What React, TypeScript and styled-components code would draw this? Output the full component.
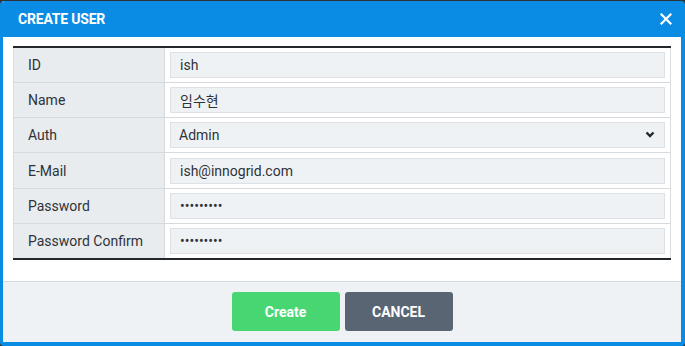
import React from "react";
import styled, { createGlobalStyle } from "styled-components";

const Global = createGlobalStyle`
  html, body { margin: 0; padding: 0; background: #2d3237; }
  body { font-family: Roboto, "Noto Sans CJK KR", "Liberation Sans", sans-serif; }
  * { box-sizing: border-box; }
`;

const Dialog = styled.div`
  margin-top: 1px;
  width: 685px;
  height: 345px;
  background: #ffffff;
  border: 4px solid #0a8ce5;
  border-top: 0;
  border-left-width: 3px;
  border-radius: 4px;
  display: flex;
  flex-direction: column;
  overflow: hidden;
`;

const Header = styled.div`
  height: 36px;
  flex: none;
  background: #0a8ce5;
  display: flex;
  align-items: center;
  justify-content: space-between;
  padding: 0 7px 0 15px;
  color: #ffffff;
`;

const Title = styled.h2`
  margin: 0;
  font-size: 14px;
  font-weight: 700;
  letter-spacing: -0.2px;
`;

const Close = styled.button`
  border: 0;
  background: transparent;
  padding: 0;
  width: 16px;
  height: 16px;
  display: flex;
  align-items: center;
  justify-content: center;
  cursor: pointer;
`;

const Body = styled.div`
  flex: 1;
  padding: 9px 10px 0 10px;
`;

const Table = styled.table`
  width: 100%;
  border-collapse: collapse;
  border-top: 2px solid #24282c;
  border-bottom: 2px solid #24282c;
  border-left: 1px solid #d9dde0;
  border-right: 1px solid #d9dde0;
  font-size: 14px;
  color: #2f3338;
`;

const Row = styled.tr`
  height: 35.3px;
  & + & { border-top: 1px solid #d6dadd; }
`;

const Label = styled.th`
  width: 151px;
  background: #e8ecef;
  text-align: left;
  font-weight: 400;
  padding: 0 0 0 14px;
  border-right: 1px solid #d6dadd;
`;

const Cell = styled.td`
  padding: 0 5px;
`;

const Field = styled.input`
  display: block;
  width: 100%;
  height: 26px;
  background: #eff2f5;
  border: 1px solid #dde1e5;
  padding: 0 9px;
  font-family: inherit;
  font-size: 14px;
  color: #2f3338;
  outline: none;
`;

const SelectWrap = styled.div`
  position: relative;
`;

const Select = styled.select`
  display: block;
  width: 100%;
  height: 26px;
  background: #eff2f5;
  border: 1px solid #dde1e5;
  padding: 0 8px;
  font-family: inherit;
  font-size: 14px;
  color: #2f3338;
  appearance: none;
  outline: none;
`;

const Chevron = styled.svg`
  position: absolute;
  right: 10px;
  top: 9px;
  pointer-events: none;
`;

const Footer = styled.div`
  flex: none;
  height: 61px;
  border-top: 1px solid #d6dadd;
  background: #eef2f5;
  display: flex;
  justify-content: center;
  align-items: flex-start;
  padding-top: 10px;
  gap: 5px;
`;

const Button = styled.button<{ $tone: "green" | "gray" }>`
  width: 108px;
  height: 39px;
  border: 0;
  border-radius: 3px;
  background: ${(p) => (p.$tone === "green" ? "#48d672" : "#5a6574")};
  color: #ffffff;
  font-family: inherit;
  font-size: 14px;
  font-weight: 700;
  cursor: pointer;
`;

const fields: { label: string; value: string; type?: string; select?: boolean }[] = [
  { label: "ID", value: "ish" },
  { label: "Name", value: "임수현" },
  { label: "Auth", value: "Admin", select: true },
  { label: "E-Mail", value: "ish@innogrid.com" },
  { label: "Password", value: "123456789", type: "password" },
  { label: "Password Confirm", value: "123456789", type: "password" },
];

export default function App() {
  return (
    <>
      <Global />
      <Dialog>
        <Header>
          <Title>CREATE USER</Title>
          <Close aria-label="close">
            <svg width="12" height="12" viewBox="0 0 12 12">
              <path d="M1.5 1.5 L10.5 10.5 M10.5 1.5 L1.5 10.5" stroke="#fff" strokeWidth="2.2" strokeLinecap="square" />
            </svg>
          </Close>
        </Header>
        <Body>
          <Table>
            <tbody>
              {fields.map((f) => (
                <Row key={f.label}>
                  <Label>{f.label}</Label>
                  <Cell>
                    {f.select ? (
                      <SelectWrap>
                        <Select defaultValue={f.value}>
                          <option>Admin</option>
                          <option>User</option>
                        </Select>
                        <Chevron width="10" height="8" viewBox="0 0 10 8">
                          <path d="M1.5 1.5 L5 5 L8.5 1.5" fill="none" stroke="#23272b" strokeWidth="2.4" />
                        </Chevron>
                      </SelectWrap>
                    ) : (
                      <Field type={f.type ?? "text"} defaultValue={f.value} readOnly />
                    )}
                  </Cell>
                </Row>
              ))}
            </tbody>
          </Table>
        </Body>
        <Footer>
          <Button $tone="green">Create</Button>
          <Button $tone="gray">CANCEL</Button>
        </Footer>
      </Dialog>
    </>
  );
}
